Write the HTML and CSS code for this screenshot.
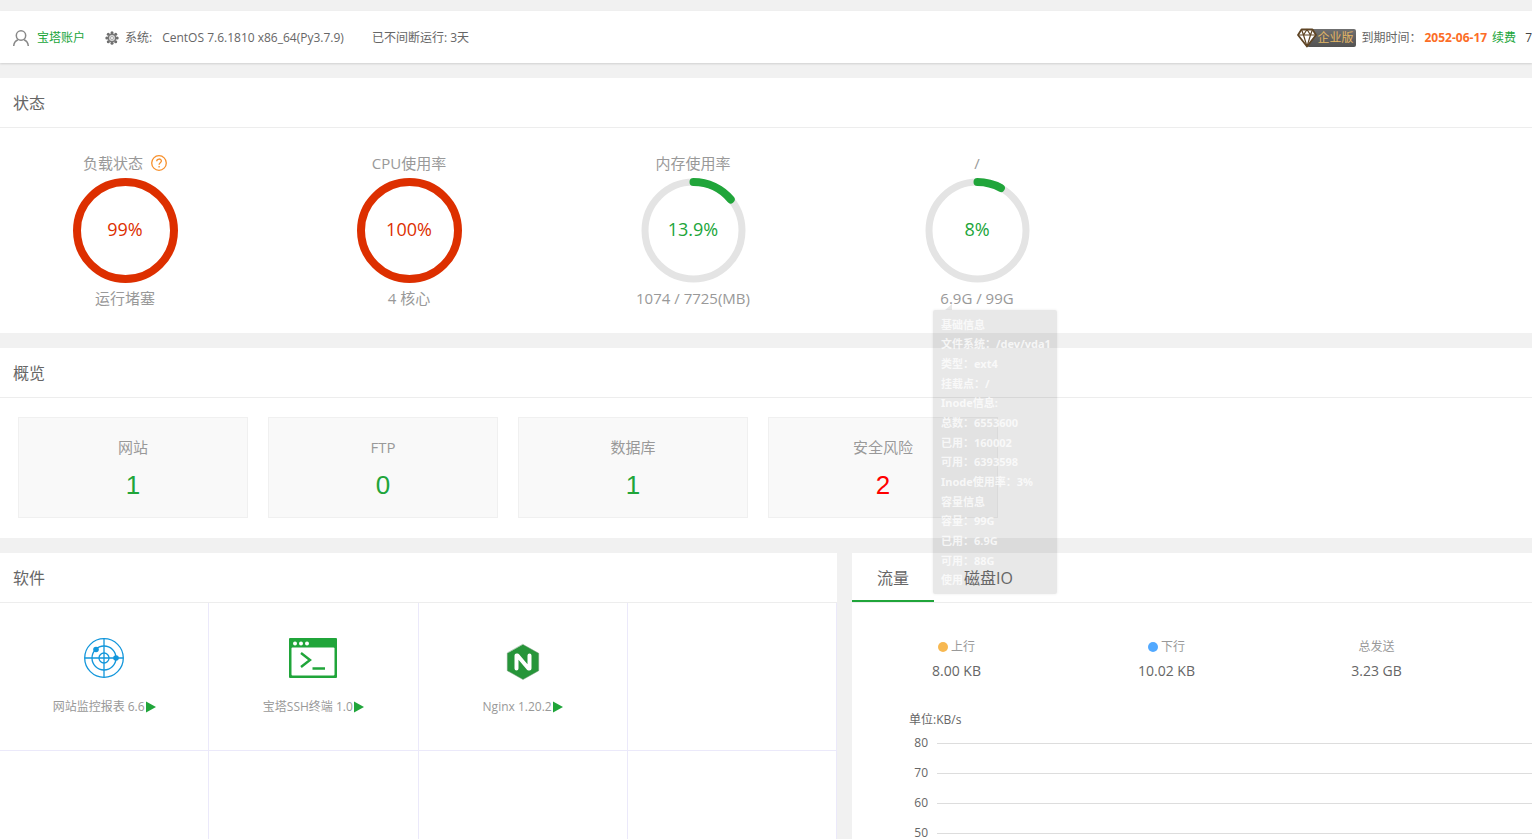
FILE: index.html
```html
<!DOCTYPE html>
<html lang="zh-CN">
<head>
<meta charset="utf-8">
<title>宝塔面板</title>
<link rel="stylesheet" href="styles.css">
</head>
<body>
<header class="topbar">
  <svg class="icon-user" viewBox="0 0 16 16" width="16" height="16"><circle cx="8" cy="5.500" r="4.700"/><path d="M.7 16c.2-3.200 1.800-5.300 4.300-6.300M15.300 16c-.2-3.200-1.800-5.300-4.300-6.300"/></svg>
  <a class="account" href="#">宝塔账户</a>
  <svg class="icon-gear" viewBox="0 0 14 14" width="14" height="14"><circle cx="7" cy="1.800" r="1.500"/><circle cx="10.700" cy="3.300" r="1.500"/><circle cx="12.200" cy="7" r="1.500"/><circle cx="10.700" cy="10.700" r="1.500"/><circle cx="7" cy="12.200" r="1.500"/><circle cx="3.300" cy="10.700" r="1.500"/><circle cx="1.800" cy="7" r="1.500"/><circle cx="3.300" cy="3.300" r="1.500"/><circle class="rim" cx="7" cy="7" r="3.700"/><circle class="hub" cx="7" cy="7" r="1.500"/></svg>
  <span class="sys-label">系统:</span>
  <span class="sys-name">CentOS 7.6.1810 x86_64(Py3.7.9)</span>
  <span class="uptime">已不间断运行: 3天</span>
  <div class="license">
    <span class="edition">
      <svg class="icon-diamond" viewBox="0 0 20 20" width="20" height="20"><path d="M4.500 1.500h11L19 7l-9 11.500L1 7z"/><path d="M1 7h18M4.500 1.500 6.500 7 10 18.500 13.500 7l2-5.500M6.500 7 10 1.500 13.500 7"/></svg>
      <span class="edition-name">企业版</span>
    </span>
    <span class="expire-label">到期时间：</span>
    <strong class="expire-date">2052-06-17</strong>
    <a class="renew" href="#">续费</a>
    <span class="version">7</span>
  </div>
</header>

<main class="content">
  <section class="panel">
    <h2 class="panel-title">状态</h2>
    <div class="gauges">
      <div class="gauge danger">
        <div class="gauge-label">负载状态
          <svg class="icon-help" viewBox="0 0 16 16" width="16" height="16"><circle cx="8" cy="8" r="7.300"/><path d="M5.700 6.300c0-3 4.700-3 4.700-.2 0 1.700-2.300 1.700-2.300 3.600M8.100 11v1.500"/></svg>
        </div>
        <div class="dial">
          <svg viewBox="0 0 105 105" width="105" height="105"><circle class="arc" cx="52.500" cy="52.500" r="48.500"/></svg>
          <span class="dial-value">99%</span>
        </div>
        <div class="gauge-note">运行堵塞</div>
      </div>
      <div class="gauge danger">
        <div class="gauge-label">CPU使用率</div>
        <div class="dial">
          <svg viewBox="0 0 105 105" width="105" height="105"><circle class="arc" cx="52.500" cy="52.500" r="48.500"/></svg>
          <span class="dial-value">100%</span>
        </div>
        <div class="gauge-note">4 核心</div>
      </div>
      <div class="gauge">
        <div class="gauge-label">内存使用率</div>
        <div class="dial">
          <svg viewBox="0 0 105 105" width="105" height="105"><circle class="track" cx="52.500" cy="52.500" r="48.500"/><path class="arc" d="M52.500 4A48.500 48.500 0 0 1 89.700 21.400"/></svg>
          <span class="dial-value">13.9%</span>
        </div>
        <div class="gauge-note">1074 / 7725(MB)</div>
      </div>
      <div class="gauge">
        <div class="gauge-label">/</div>
        <div class="dial">
          <svg viewBox="0 0 105 105" width="105" height="105"><circle class="track" cx="52.500" cy="52.500" r="48.500"/><path class="arc" d="M52.500 4A48.500 48.500 0 0 1 75.900 10"/></svg>
          <span class="dial-value">8%</span>
        </div>
        <div class="gauge-note">6.9G / 99G</div>
        <div class="tooltip" role="tooltip">
          <span>基础信息</span>
          <span>文件系统：/dev/vda1</span>
          <span>类型：ext4</span>
          <span>挂载点：/</span>
          <span>Inode信息:</span>
          <span>总数：6553600</span>
          <span>已用：160002</span>
          <span>可用：6393598</span>
          <span>Inode使用率：3%</span>
          <span>容量信息</span>
          <span>容量：99G</span>
          <span>已用：6.9G</span>
          <span>可用：88G</span>
          <span>使用</span>
        </div>
      </div>
    </div>
  </section>

  <section class="panel">
    <h2 class="panel-title">概览</h2>
    <div class="cards">
      <div class="card"><span class="card-name">网站</span><a class="card-count" href="#">1</a></div>
      <div class="card"><span class="card-name">FTP</span><a class="card-count" href="#">0</a></div>
      <div class="card"><span class="card-name">数据库</span><a class="card-count" href="#">1</a></div>
      <div class="card"><span class="card-name">安全风险</span><a class="card-count risk" href="#">2</a></div>
    </div>
  </section>

  <div class="columns">
    <section class="panel">
      <h2 class="panel-title">软件</h2>
      <div class="apps">
        <div class="app">
          <svg class="icon-radar" viewBox="0 0 40 40" width="48" height="40"><circle cx="20" cy="20" r="19.300"/><circle cx="20" cy="20" r="12"/><circle cx="20" cy="20" r="5"/><path d="M20 1v38M1 20h38"/><circle class="blip" cx="12" cy="11.500" r="2.800"/><circle class="blip" cx="32" cy="20" r="2.800"/></svg>
          <span class="app-name">网站监控报表 6.6<svg class="icon-play" viewBox="0 0 10 12" width="10" height="12"><path d="M0 .5 10 6 0 11.500z"/></svg></span>
        </div>
        <div class="app">
          <svg class="icon-terminal" viewBox="0 0 48 40" width="48" height="40"><rect class="frame" x="0" y="0" width="48" height="40" rx="1"/><rect class="screen" x="2.500" y="9.500" width="43" height="28" rx="1"/><circle class="screen" cx="6" cy="5.500" r="2"/><circle class="screen" cx="12" cy="5.500" r="2"/><circle class="screen" cx="18" cy="5.500" r="2"/><path d="M12 15l9 7-9 7M23.500 30.500H36"/></svg>
          <span class="app-name">宝塔SSH终端 1.0<svg class="icon-play" viewBox="0 0 10 12" width="10" height="12"><path d="M0 .5 10 6 0 11.500z"/></svg></span>
        </div>
        <div class="app">
          <svg class="icon-nginx" viewBox="0 0 48 40" width="48" height="40"><path class="hex" d="M24 6.500 39.700 15.300v17.400L24 41.500 8.300 32.700V15.300z"/><polyline points="17.500,30.500 17.500,17.500 18.500,17.500 29.500,30.500 30.500,30.500 30.500,17.500"/></svg>
          <span class="app-name">Nginx 1.20.2<svg class="icon-play" viewBox="0 0 10 12" width="10" height="12"><path d="M0 .5 10 6 0 11.500z"/></svg></span>
        </div>
        <div class="app"></div>
        <div class="app"></div>
        <div class="app"></div>
        <div class="app"></div>
        <div class="app"></div>
      </div>
    </section>

    <section class="panel">
      <div class="tabs" role="tablist">
        <button class="tab active" type="button" role="tab" aria-selected="true">流量</button>
        <button class="tab" type="button" role="tab" aria-selected="false">磁盘IO</button>
      </div>
      <div class="stats">
        <div class="stat"><span class="stat-name"><i class="dot up"></i>上行</span><span class="stat-value">8.00 KB</span></div>
        <div class="stat"><span class="stat-name"><i class="dot down"></i>下行</span><span class="stat-value">10.02 KB</span></div>
        <div class="stat"><span class="stat-name">总发送</span><span class="stat-value">3.23 GB</span></div>
      </div>
      <div class="chart">
        <div class="chart-unit">单位:KB/s</div>
        <div class="tick"><span>80</span></div>
        <div class="tick"><span>70</span></div>
        <div class="tick"><span>60</span></div>
        <div class="tick"><span>50</span></div>
      </div>
    </section>
  </div>
</main>
</body>
</html>
```
FILE: styles.css
```css
* { box-sizing: border-box; }

body {
  margin: 0;
  padding-top: 11px;
  height: 100vh;
  overflow: hidden;
  background: #f1f1f1;
  color: #666;
  font-family: "Open Sans", "Noto Sans CJK SC", sans-serif;
  font-size: 12px;
  line-height: 20px;
}

a { color: #20a53a; text-decoration: none; }
svg { flex: none; fill: none; }

/* Top bar */
.topbar {
  display: flex;
  align-items: center;
  height: 52px;
  padding: 1px 0 0 13px;
  background: #fff;
  box-shadow: 0 1px 2px rgba(0, 0, 0, .14);
  white-space: nowrap;
}
.icon-user { stroke: #888; stroke-width: 1.5; }
.account { margin: 0 20px 0 8px; }
.icon-gear { fill: #6e6e6e; }
.icon-gear .rim { fill: #ddd; stroke: #777; stroke-width: 1.5; }
.icon-gear .hub { fill: #fff; stroke: #999; stroke-width: .8; }
.sys-label { margin: 0 10px 0 6px; }
.uptime { margin-left: 28px; }
.license { display: flex; align-items: center; margin-left: auto; }
.edition { display: flex; align-items: center; margin-right: 5px; }
.icon-diamond { z-index: 1; margin-right: -10px; fill: #fff; stroke: #5f4525; stroke-width: 1.8; stroke-linejoin: round; }
.icon-diamond path + path { fill: none; stroke-width: 1.2; }
.edition-name {
  padding: 0 3px 0 10px;
  border-radius: 2px;
  background: linear-gradient(#707070, #525252);
  color: #e3b664;
  line-height: 18px;
}
.expire-label { margin-right: 3px; }
.expire-date { color: #fc6d26; }
.renew { margin: 0 9px 0 5px; }
.version { color: #444; }

/* Panels */
.content { display: flex; flex-direction: column; gap: 15px; padding-top: 15px; }
.panel { background: #fff; }
.panel-title {
  height: 50px;
  margin: 0;
  padding-left: 13px;
  border-bottom: 1px solid #ededed;
  font-size: 16px;
  font-weight: 400;
  line-height: 50px;
}

/* Gauges */
.gauges { display: flex; gap: 34px; padding: 24px 0; color: #999; font-size: 15px; line-height: 22px; }
.gauge { position: relative; width: 250px; text-align: center; }
.gauge-label { display: flex; align-items: center; justify-content: center; gap: 8px; height: 22px; }
.icon-help { stroke: #f7902c; stroke-width: 1.3; }
.dial { display: grid; place-items: center; margin: 4px 0; color: #20a53a; }
.dial > * { grid-area: 1 / 1; }
.dial-value { padding-bottom: 4px; font-size: 18px; }
.arc { stroke: #20a53a; stroke-width: 8; stroke-linecap: round; }
.track { stroke: #e4e4e4; stroke-width: 7; }
.danger .dial { color: #dd2f00; }
.danger .arc { stroke: #dd2f00; }

.tooltip {
  position: absolute;
  z-index: 2;
  top: 158px;
  left: 81px;
  display: grid;
  grid-auto-rows: 1fr;
  align-items: center;
  width: 124px;
  height: 284px;
  padding: 5px 8px 4px;
  border-radius: 2px;
  background: rgba(0, 0, 0, .09);
  box-shadow: 0 0 3px rgba(0, 0, 0, .08);
  color: rgba(255, 255, 255, .75);
  font-family: "Noto Sans", "Noto Sans CJK SC", sans-serif;
  font-size: 11px;
  font-weight: 700;
  line-height: 16px;
  text-align: left;
  white-space: nowrap;
}
.tooltip::before {
  content: "";
  position: absolute;
  top: -6px;
  left: 12px;
  border-left: 7px solid transparent;
  border-bottom: 6px solid rgba(0, 0, 0, .09);
}

/* Overview cards */
.cards { display: flex; gap: 20px; padding: 19px 18px 20px; }
.card {
  display: flex;
  flex-direction: column;
  align-items: center;
  width: 230px;
  height: 101px;
  padding-top: 18px;
  border: 1px solid #f0f0f0;
  background: #f9f9f9;
}
.card-name { color: #999; font-size: 15px; line-height: 22px; }
.card-count { margin-top: 12px; font-family: "Liberation Sans", sans-serif; font-size: 26px; line-height: 30px; }
.risk { color: #f00; }

/* Software grid */
.columns { display: grid; grid-template-columns: 837fr 680fr; gap: 15px; }
.columns .panel { min-width: 0; }
.apps { display: grid; grid-template-columns: repeat(4, 1fr); grid-auto-rows: 148px; }
.app {
  display: flex;
  flex-direction: column;
  align-items: center;
  gap: 19px;
  padding-top: 35px;
  border-right: 1px solid #ebe9fa;
  border-bottom: 1px solid #ebe9fa;
}
.app-name { display: flex; align-items: center; gap: 1px; color: #999; }
.icon-radar { stroke: #1296db; stroke-width: 1.3; }
.icon-radar .blip { fill: #1296db; stroke: none; }
.icon-terminal { stroke: #20a53a; stroke-width: 2.4; }
.icon-terminal .frame { fill: #20a53a; stroke: none; }
.icon-terminal .screen { fill: #fff; stroke: none; }
.icon-nginx { overflow: visible; stroke: #fff; stroke-width: 4; stroke-linecap: round; stroke-linejoin: round; }
.icon-nginx .hex { fill: #269539; stroke: #6f9a75; stroke-width: .5; }
.icon-play path { fill: #20a53a; }

/* Traffic */
.tabs { display: flex; gap: 5px; height: 50px; border-bottom: 1px solid #ededed; }
.tab {
  position: relative;
  z-index: 3;
  height: 49px;
  padding: 2px 25px 0;
  border: 0;
  border-bottom: 2px solid transparent;
  background: none;
  color: #666;
  font: inherit;
  font-size: 16px;
}
.tab.active { border-bottom-color: #20a53a; }
.stats { display: flex; padding-top: 34px; }
.stat { display: flex; flex-direction: column; align-items: center; gap: 4px; width: 209px; }
.stat + .stat { margin-left: 1px; }
.stat-name { display: flex; align-items: center; gap: 3px; color: #999; }
.stat-value { font-size: 14px; }
.dot { width: 10px; height: 10px; border-radius: 50%; }
.up { background: #f7b851; }
.down { background: #52a9ff; }
.chart { padding: 29px 0 0 57px; }
.chart-unit { height: 22px; }
.tick { display: flex; align-items: center; gap: 9px; height: 30px; line-height: 20px; padding-bottom: 8px; }
.tick span { width: 19px; text-align: right; }
.tick::after { content: ""; flex: 1; height: 1px; background: #ddd; }
```
